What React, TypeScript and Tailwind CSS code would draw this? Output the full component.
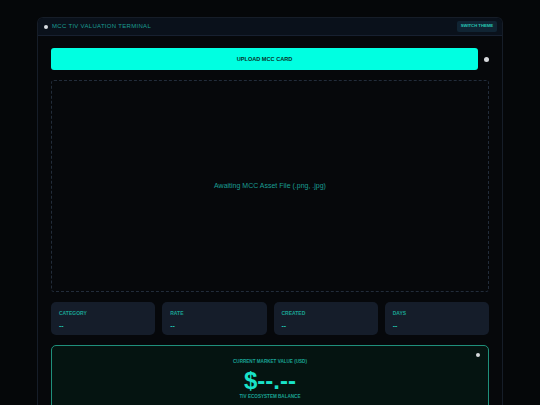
import React from 'react';

const stats = ['Category', 'Rate', 'Created', 'Days'];

const App: React.FC = () => {
  return (
    <div className="min-h-[405px] bg-[#050709] pt-[17px] font-['Liberation_Sans',Arial,sans-serif]">
      <div className="mx-auto w-[466px] overflow-hidden rounded-t-[6px] border border-b-0 border-[#161d28] bg-[#06080b]">
        {/* Header */}
        <div className="flex h-[18px] items-center justify-between border-b border-[#172030] bg-[#0a111b] pl-[6px] pr-[5px]">
          <div className="flex items-center gap-[4px]">
            <span className="h-[4px] w-[4px] rounded-full bg-[#d8dde2]" />
            <span className="text-[6px] uppercase tracking-[0.05em] text-[#1a9e92]">MCC TIV Valuation Terminal</span>
          </div>
          <button className="rounded-[2px] bg-[#102433] px-[4px] py-[2px] text-[4.2px] font-bold uppercase text-[#27c9b5]">
            Switch Theme
          </button>
        </div>

        {/* Body */}
        <div className="flex flex-col gap-[10px] px-[13px] pt-[12px]">
          <div className="flex items-center gap-[6px]">
            <button className="flex h-[22px] flex-1 items-center justify-center rounded-[3px] bg-[#00ffe1] text-[5.6px] font-bold uppercase text-[#07302b]">
              Upload MCC Card
            </button>
            <span className="h-[5px] w-[5px] rounded-full bg-[#d6d9dc]" />
          </div>

          <div className="flex h-[212px] items-center justify-center rounded-[3px] border border-dashed border-[#222c3a]">
            <span className="text-[7px] text-[#1a9e92]">Awaiting MCC Asset File (.png, .jpg)</span>
          </div>

          <div className="grid grid-cols-4 gap-[7px]">
            {stats.map((s) => (
              <div key={s} className="flex h-[33px] flex-col gap-[4px] rounded-[5px] bg-[#151d2a] px-[8px] pt-[8px]">
                <span className="text-[5px] font-bold uppercase text-[#1aa394]">{s}</span>
                <span className="text-[7px] font-bold leading-none text-[#22c7b2]">--</span>
              </div>
            ))}
          </div>

          <div className="relative flex h-[80px] flex-col items-center rounded-[5px] border border-[#1f8f7b] bg-[#051411] pt-[13px]">
            <span className="absolute right-[8px] top-[7px] h-[4px] w-[4px] rounded-full bg-[#d6d9dc]" />
            <span className="text-[4.6px] font-bold uppercase text-[#1aa394]">Current Market Value (USD)</span>
            <span className="mt-[2px] text-[24px] font-bold leading-[26px] text-[#19e3c9]">$--.--</span>
            <span className="text-[4.6px] font-bold uppercase text-[#1aa394]">TIV Ecosystem Balance</span>
          </div>
        </div>
      </div>
    </div>
  );
};

export default App;
